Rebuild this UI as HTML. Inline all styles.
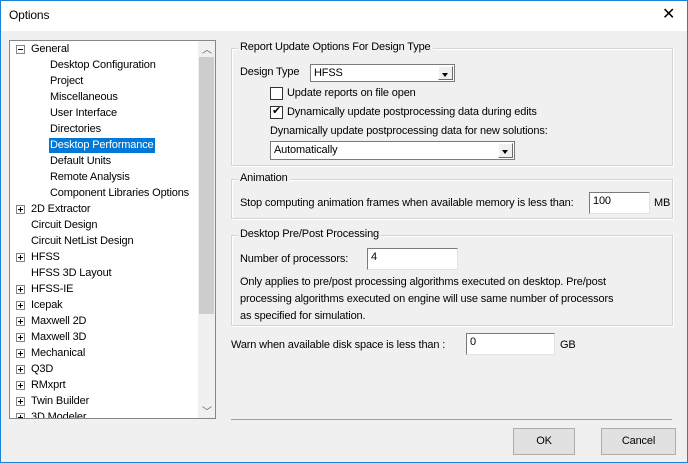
<!DOCTYPE html><html><head><style>
*{box-sizing:border-box}
body{margin:0;width:688px;height:463px;overflow:hidden;background:#f0f0f0;font:11px "Liberation Sans",sans-serif;letter-spacing:-0.15px;color:#000;position:relative}
.a{position:absolute;white-space:nowrap}
.win{position:absolute;left:0;top:0;width:688px;height:463px;border:1px solid #1883d7}
.title{position:absolute;left:1px;top:1px;width:686px;height:30px;background:#fff}
.tree{position:absolute;left:9px;top:40px;width:207px;height:379px;background:#fff;border:1px solid #828790;overflow:hidden}
.pb{position:absolute;width:9px;height:9px;border:1px solid #848484;background:#fff}
.pb:before{content:"";position:absolute;left:1px;top:3px;width:5px;height:1px;background:#000}
.pb.p:after{content:"";position:absolute;left:3px;top:1px;width:1px;height:5px;background:#000}
.grp{position:absolute;border:1px solid #d5d5d5;box-shadow:inset 1px 1px 0 #fff,1px 1px 0 #fff}
.gt{position:absolute;top:-8px;left:6px;background:#f0f0f0;padding:0 2px}
.inp{position:absolute;background:#fff;border:1px solid #7a7a7a;border-right-color:#e3e3e3;border-bottom-color:#e3e3e3;padding:2px 3px}
.sel{position:absolute;background:#fff;border:1px solid #7a7a7a;padding:2px 3px}
.dd{position:absolute;right:1px;top:1px;bottom:1px;width:15px;background:#f0f0f0;border:1px solid #fff;border-right-color:#696969;border-bottom-color:#696969}
.dd:after{content:"";position:absolute;left:3px;top:6px;border:3px solid transparent;border-top:4px solid #000;border-bottom:0}
.cb{position:absolute;width:13px;height:13px;border:1px solid #333;background:#fff}
.btn{position:absolute;background:#e1e1e1;border:1px solid #adadad;text-align:center;line-height:25px}
</style></head><body>
<div class="win"></div><div class="title"></div>
<div class="a" style="left:9px;top:8px;font-size:12px">Options</div>
<div class="a" style="left:662px;top:4px;font-size:16px">✕</div>
<div class="tree">
<div class="a" style="left:188px;top:0;width:17px;height:378px;background:#f0f0f0"></div>
<div class="a" style="left:189px;top:16px;width:15px;height:257px;background:#cdcdcd"></div>
<div class="a" style="left:192px;top:0px;font-size:10px;color:#606060">︿</div>
<div class="a" style="left:192px;top:362px;font-size:10px;color:#606060">﹀</div>
<div class="pb" style="left:6px;top:4px"></div>
<div class="a" style="left:21px;top:2px">General</div>
<div class="a" style="left:40px;top:18px">Desktop Configuration</div>
<div class="a" style="left:40px;top:34px">Project</div>
<div class="a" style="left:40px;top:50px">Miscellaneous</div>
<div class="a" style="left:40px;top:66px">User Interface</div>
<div class="a" style="left:40px;top:82px">Directories</div>
<div class="a" style="left:39px;top:97px;background:#0078d7;color:#fff;padding:0 1px;height:15px;line-height:14px">Desktop Performance</div>
<div class="a" style="left:40px;top:114px">Default Units</div>
<div class="a" style="left:40px;top:130px">Remote Analysis</div>
<div class="a" style="left:40px;top:146px">Component Libraries Options</div>
<div class="pb p" style="left:6px;top:164px"></div><div class="a" style="left:21px;top:162px">2D Extractor</div>
<div class="a" style="left:21px;top:178px">Circuit Design</div>
<div class="a" style="left:21px;top:194px">Circuit NetList Design</div>
<div class="pb p" style="left:6px;top:212px"></div><div class="a" style="left:21px;top:210px">HFSS</div>
<div class="a" style="left:21px;top:226px">HFSS 3D Layout</div>
<div class="pb p" style="left:6px;top:244px"></div><div class="a" style="left:21px;top:242px">HFSS-IE</div>
<div class="pb p" style="left:6px;top:260px"></div><div class="a" style="left:21px;top:258px">Icepak</div>
<div class="pb p" style="left:6px;top:276px"></div><div class="a" style="left:21px;top:274px">Maxwell 2D</div>
<div class="pb p" style="left:6px;top:292px"></div><div class="a" style="left:21px;top:290px">Maxwell 3D</div>
<div class="pb p" style="left:6px;top:308px"></div><div class="a" style="left:21px;top:306px">Mechanical</div>
<div class="pb p" style="left:6px;top:324px"></div><div class="a" style="left:21px;top:322px">Q3D</div>
<div class="pb p" style="left:6px;top:340px"></div><div class="a" style="left:21px;top:338px">RMxprt</div>
<div class="pb p" style="left:6px;top:356px"></div><div class="a" style="left:21px;top:354px">Twin Builder</div>
<div class="pb p" style="left:6px;top:372px"></div><div class="a" style="left:21px;top:370px">3D Modeler</div>
</div>
<div class="grp" style="left:231px;top:48px;width:442px;height:118px"><div class="gt">Report Update Options For Design Type</div></div>
<div class="a" style="left:240px;top:66px">Design Type</div>
<div class="sel" style="left:310px;top:64px;width:145px;height:18px">HFSS<div class="dd"></div></div>
<div class="cb" style="left:270px;top:87px"></div><div class="a" style="left:287px;top:87px">Update reports on file open</div>
<div class="cb" style="left:270px;top:106px"><span style="position:absolute;left:1px;top:-3px;font-size:11px">✔</span></div><div class="a" style="left:287px;top:106px">Dynamically update postprocessing data during edits</div>
<div class="a" style="left:270px;top:125px">Dynamically update postprocessing data for new solutions:</div>
<div class="sel" style="left:270px;top:141px;width:245px;height:19px">Automatically<div class="dd"></div></div>
<div class="grp" style="left:231px;top:179px;width:442px;height:40px"><div class="gt">Animation</div></div>
<div class="a" style="left:240px;top:197px">Stop computing animation frames when available memory is less than:</div>
<div class="inp" style="left:589px;top:192px;width:61px;height:22px">100</div>
<div class="a" style="left:654px;top:197px">MB</div>
<div class="grp" style="left:231px;top:235px;width:442px;height:91px"><div class="gt">Desktop Pre/Post Processing</div></div>
<div class="a" style="left:240px;top:253px">Number of processors:</div>
<div class="inp" style="left:367px;top:248px;width:91px;height:22px">4</div>
<div class="a" style="left:240px;top:274px;line-height:17px">Only applies to pre/post processing algorithms executed on desktop. Pre/post<br>processing algorithms executed on engine will use same number of processors<br>as specified for simulation.</div>
<div class="a" style="left:231px;top:339px">Warn when available disk space is less than :</div>
<div class="inp" style="left:466px;top:333px;width:89px;height:22px">0</div>
<div class="a" style="left:560px;top:339px">GB</div>
<div class="a" style="left:231px;top:419px;width:441px;height:1px;background:#a0a0a0"></div>
<div class="btn" style="left:513px;top:428px;width:62px;height:27px">OK</div>
<div class="btn" style="left:601px;top:428px;width:75px;height:27px">Cancel</div>
</body></html>
